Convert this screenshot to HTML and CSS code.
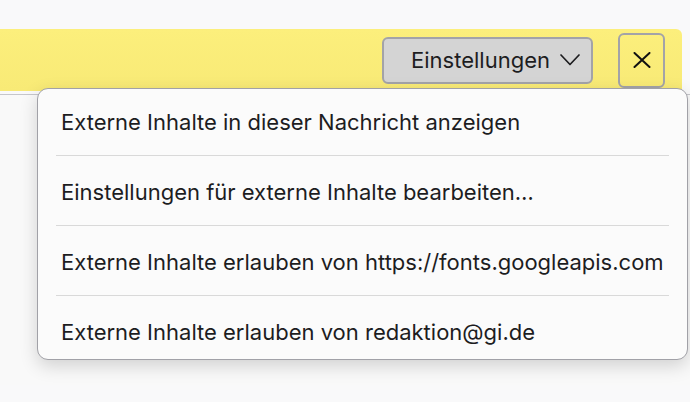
FILE: index.html
```html
<!DOCTYPE html>
<html lang="de">
<head>
  <meta charset="UTF-8">
  <meta name="viewport" content="width=device-width, initial-scale=1.0">
  <title>Externe Inhalte</title>
  <link rel="stylesheet" href="styles.css">
</head>
<body>
  <div class="notice">
    <button class="settings" type="button">
      Einstellungen
      <svg class="chevron" width="20" height="12" viewBox="0 0 20 12"><path d="M1 1 L10 10.5 L19 1" fill="none" stroke="#1d1d1f" stroke-width="1.7" stroke-linecap="round" stroke-linejoin="round"/></svg>
    </button>
    <button class="close" type="button" aria-label="Schließen">
      <svg width="18" height="16" viewBox="0 0 18 16"><path d="M1.5 1 L16.5 15 M16.5 1 L1.5 15" fill="none" stroke="#111" stroke-width="2" stroke-linecap="round"/></svg>
    </button>
  </div>
  <div class="content"></div>

  <div class="menu">
    <div class="item">Externe Inhalte in dieser Nachricht anzeigen</div>
    <hr>
    <div class="item">Einstellungen für externe Inhalte bearbeiten…</div>
    <hr>
    <div class="item">Externe Inhalte erlauben von https://fonts.googleapis.com</div>
    <hr>
    <div class="item">Externe Inhalte erlauben von redaktion@gi.de</div>
  </div>
</body>
</html>
```

FILE: styles.css
```css
html, body {
  overflow: hidden;
}
body {
  margin: 0;
  padding-top: 29px;
  background: #f9f9fa;
  font-family: Inter, "Noto Sans", sans-serif;
  color: #1d1d1f;
}
.notice {
  width: 682px;
  height: 62px;
  background: linear-gradient(#fcef7c, #f8ea76);
  border-top-right-radius: 6px;
  display: flex;
  align-items: center;
  justify-content: flex-end;
  gap: 25px;
  padding-right: 17px;
  box-sizing: border-box;
}
.settings {
  display: flex;
  align-items: center;
  gap: 10px;
  height: 47px;
  width: 211px;
  padding: 0 9px 0 27px;
  background: #d4d4d4;
  border: 2px solid #a3a3a8;
  border-radius: 6px;
  font-family: inherit;
  font-size: 22px;
  color: #1d1d1f;
  box-sizing: border-box;
  white-space: nowrap;
}
.close {
  width: 47px;
  height: 55px;
  background: transparent;
  border: 2px solid #a3a3a8;
  border-radius: 6px;
  display: flex;
  align-items: center;
  justify-content: center;
  padding: 0;
  box-sizing: border-box;
}
.content {
  margin-top: 3px;
  border-top: 1px solid #c6c6cb;
  height: 290px;
  background: #f9f9f9;
}
.menu {
  position: absolute;
  left: 37px;
  top: 88px;
  width: 651px;
  box-sizing: border-box;
  background: #fbfbfb;
  border: 1px solid #a1a1a7;
  border-radius: 11px;
  box-shadow: 0 6px 18px rgba(0, 0, 0, 0.16);
  padding: 0 18px;
  font-size: 22px;
}
.item {
  line-height: 22px;
  padding: 22px 5px;
  white-space: nowrap;
}
hr {
  border: 0;
  border-top: 1px solid #d9d9d9;
  margin: 0 0 3px;
}
.item:last-child {
  padding-bottom: 16px;
}
```
